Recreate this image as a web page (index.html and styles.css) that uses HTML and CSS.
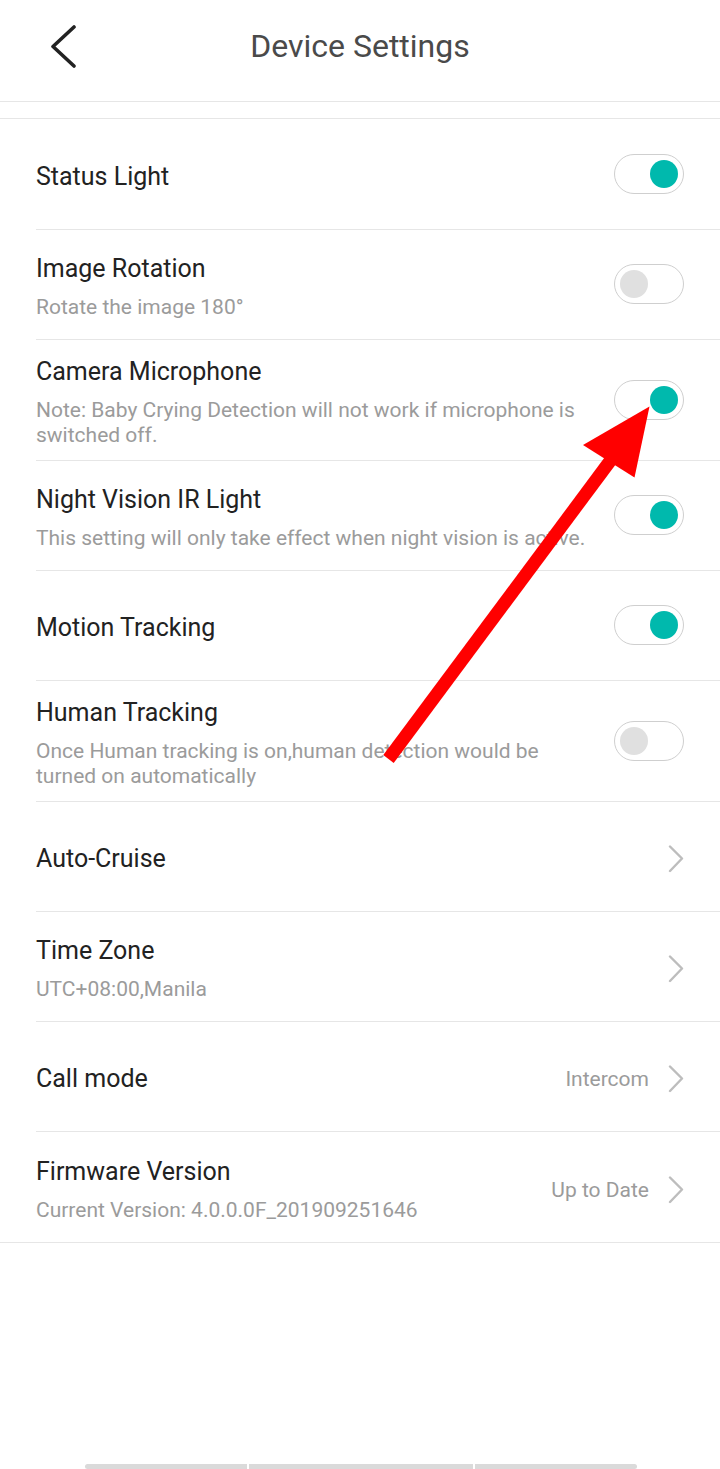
FILE: index.html
```html
<!DOCTYPE html>
<html lang="en">
<head>
<meta charset="utf-8">
<title>Device Settings</title>
<link rel="stylesheet" href="styles.css">
</head>
<body>
<div class="screen">
  <header class="topbar">
    <div class="back">
      <svg width="32" height="44" viewBox="0 0 32 44"><path d="M26 3 L5 22.5 L26 42" fill="none" stroke="#222" stroke-width="3.6" stroke-linecap="round" stroke-linejoin="round"/></svg>
    </div>
    <h1 class="title">Device Settings</h1>
    <div></div>
  </header>

  <ul class="list">
    <li class="row first">
      <div class="text"><div class="name">Status Light</div></div>
      <span class="toggle on"><span class="knob"></span></span>
    </li>
    <li class="row">
      <div class="text"><div class="name">Image Rotation</div><div class="sub">Rotate the image 180°</div></div>
      <span class="toggle"><span class="knob"></span></span>
    </li>
    <li class="row">
      <div class="text"><div class="name">Camera Microphone</div><div class="sub">Note: Baby Crying Detection will not work if microphone is switched off.</div></div>
      <span class="toggle on"><span class="knob"></span></span>
    </li>
    <li class="row">
      <div class="text"><div class="name">Night Vision IR Light</div><div class="sub">This setting will only take effect when night vision is active.</div></div>
      <span class="toggle on"><span class="knob"></span></span>
    </li>
    <li class="row">
      <div class="text"><div class="name">Motion Tracking</div></div>
      <span class="toggle on"><span class="knob"></span></span>
    </li>
    <li class="row">
      <div class="text"><div class="name">Human Tracking</div><div class="sub">Once Human tracking is on,human detection would be turned on automatically</div></div>
      <span class="toggle"><span class="knob"></span></span>
    </li>
    <li class="row">
      <div class="text"><div class="name">Auto-Cruise</div></div>
      <span class="chev"><svg width="16" height="28" viewBox="0 0 16 28"><path d="M2 1.5 L14 13.5 L2 26" fill="none" stroke="#bdbdbd" stroke-width="2.4" stroke-linecap="round" stroke-linejoin="round"/></svg></span>
    </li>
    <li class="row">
      <div class="text"><div class="name">Time Zone</div><div class="sub">UTC+08:00,Manila</div></div>
      <span class="chev"><svg width="16" height="28" viewBox="0 0 16 28"><path d="M2 1.5 L14 13.5 L2 26" fill="none" stroke="#bdbdbd" stroke-width="2.4" stroke-linecap="round" stroke-linejoin="round"/></svg></span>
    </li>
    <li class="row">
      <div class="text"><div class="name">Call mode</div></div>
      <span class="value">Intercom</span>
      <span class="chev"><svg width="16" height="28" viewBox="0 0 16 28"><path d="M2 1.5 L14 13.5 L2 26" fill="none" stroke="#bdbdbd" stroke-width="2.4" stroke-linecap="round" stroke-linejoin="round"/></svg></span>
    </li>
    <li class="row last">
      <div class="text"><div class="name">Firmware Version</div><div class="sub">Current Version: 4.0.0.0F_201909251646</div></div>
      <span class="value">Up to Date</span>
      <span class="chev"><svg width="16" height="28" viewBox="0 0 16 28"><path d="M2 1.5 L14 13.5 L2 26" fill="none" stroke="#bdbdbd" stroke-width="2.4" stroke-linecap="round" stroke-linejoin="round"/></svg></span>
    </li>
  </ul>

  <div class="navbar">
    <span class="seg seg-l"></span>
    <span class="seg seg-m"></span>
    <span class="seg seg-r"></span>
  </div>

  <svg class="annotation" width="720" height="1469" viewBox="0 0 720 1469">
    <line x1="388.5" y1="759" x2="622" y2="445" stroke="#ff0000" stroke-width="13"/>
    <polygon points="649.5,406.5 583,445 634.5,477.5" fill="#ff0000"/>
  </svg>
</div>
</body>
</html>
```

FILE: styles.css
```css
* { box-sizing: border-box; }

html, body {
  margin: 0;
  padding: 0;
  background: #ffffff;
}

body {
  font-family: Roboto, "Liberation Sans", sans-serif;
}

.screen {
  position: relative;
  width: 720px;
  min-height: 1469px;
  display: flex;
  flex-direction: column;
  background: #ffffff;
}

.topbar {
  height: 102px;
  border-bottom: 1px solid #e6e6e6;
  display: grid;
  grid-template-columns: 1fr auto 1fr;
  align-items: start;
  padding-top: 26px;
}

.back {
  padding-left: 48px;
  margin-top: -2px;
  display: flex;
}

.title {
  margin: 0;
  font-size: 32px;
  line-height: 40px;
  font-weight: 400;
  color: #4a4a4a;
  white-space: nowrap;
}

.list {
  list-style: none;
  margin: 16px 0 0;
  padding: 0 0 0 36px;
  border-top: 1px solid #e6e6e6;
  border-bottom: 1px solid #e6e6e6;
}

.row {
  display: flex;
  align-items: center;
  min-height: 110px;
  padding: 17px 36px 12px 0;
  border-bottom: 1px solid #e6e6e6;
}

.row.first { min-height: 111px; }

.row.last { border-bottom: none; }

.text {
  flex: 1;
  min-width: 0;
  padding-right: 14px;
}

.name {
  font-size: 25px;
  line-height: 30px;
  color: #222222;
}

.sub {
  margin-top: 11px;
  font-size: 21px;
  line-height: 25px;
  color: #9b9b9b;
}

.toggle {
  flex: none;
  width: 70px;
  height: 40px;
  margin-top: -6px;
  border: 1px solid #cfcfcf;
  border-radius: 20px;
  background: #ffffff;
  display: flex;
  align-items: center;
  padding: 0 5px;
}

.toggle .knob {
  width: 28px;
  height: 28px;
  border-radius: 50%;
  background: #e0e0e0;
}

.toggle.on { justify-content: flex-end; }

.toggle.on .knob { background: #00b9ad; }

.value {
  flex: none;
  font-size: 21px;
  color: #9b9b9b;
  margin-right: 19px;
}

.chev {
  flex: none;
  display: flex;
  width: 16px;
  height: 28px;
}

.navbar {
  margin-top: auto;
  height: 5px;
  display: flex;
  justify-content: center;
  gap: 2px;
  padding-left: 1px;
}

.seg {
  height: 5px;
  background: #dadada;
}

.seg-l { width: 162px; border-radius: 3px 0 0 3px; }
.seg-m { width: 224px; }
.seg-r { width: 162px; border-radius: 0 3px 3px 0; }

.annotation {
  position: absolute;
  left: 0;
  top: 0;
  pointer-events: none;
}
```
